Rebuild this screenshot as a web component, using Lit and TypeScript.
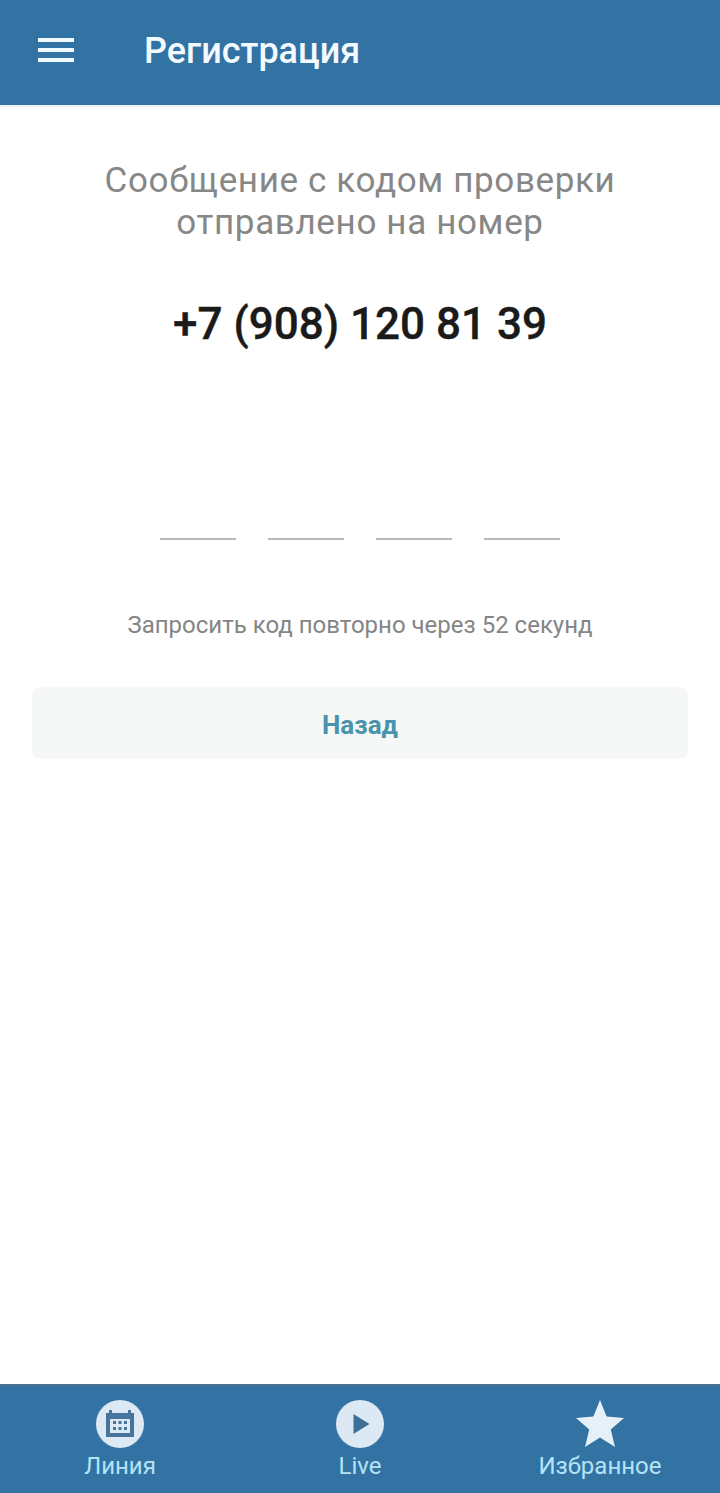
import { LitElement, html, css } from "lit";
import { customElement } from "lit/decorators.js";

@customElement("app-root")
export class AppRoot extends LitElement {
  static styles = css`
    :host {
      display: flex;
      flex-direction: column;
      height: 1493px;
      width: 720px;
      background: #fff;
      font-family: Roboto, "Liberation Sans", sans-serif;
    }
    .top {
      height: 105px;
      flex: none;
      background: #3273a4;
      display: flex;
      align-items: center;
      padding-left: 38px;
      box-sizing: border-box;
      box-shadow: 0 1px 3px rgba(50, 115, 164, 0.18);
    }
    .burger {
      width: 36px;
      display: flex;
      flex-direction: column;
      gap: 6px;
      margin-right: 70px;
      margin-top: -6px;
    }
    .burger i {
      display: block;
      height: 4px;
      background: #eefaff;
    }
    .title {
      font-size: 36px;
      font-weight: 500;
      color: #f2faff;
      line-height: 40px;
      margin-top: -4px;
    }
    .main {
      flex: 1;
      display: flex;
      flex-direction: column;
      align-items: center;
      padding: 55px 32px 0;
    }
    .msg {
      font-size: 35px;
      line-height: 42px;
      color: #878787;
      text-align: center;
      letter-spacing: 0.64px;
    }
    .phone {
      font-size: 44px;
      line-height: 52px;
      font-weight: 500;
      color: #1a1a1a;
      -webkit-text-stroke: 0.4px #1a1a1a;
      margin-top: 54px;
    }
    .code {
      display: flex;
      gap: 32px;
      margin-top: 188px;
    }
    .code i {
      display: block;
      width: 76px;
      height: 2px;
      background: #b8b8b8;
    }
    .resend {
      font-size: 24px;
      line-height: 30px;
      color: #858585;
      margin-top: 70px;
    }
    .back {
      align-self: stretch;
      height: 72px;
      margin-top: 47px;
      border-radius: 8px;
      background: #f6f7f7;
      display: flex;
      align-items: center;
      justify-content: center;
      font-size: 26px;
      font-weight: 700;
      color: #4a93ac;
      padding-top: 3px;
      box-sizing: border-box;
    }
    .nav {
      height: 109px;
      flex: none;
      background: #3273a4;
      border-top: 2px solid #4d7390;
      box-sizing: border-box;
      display: grid;
      grid-template-columns: repeat(3, 1fr);
    }
    .item {
      display: flex;
      flex-direction: column;
      align-items: center;
      padding-top: 14px;
    }
    .item svg {
      width: 48px;
      height: 48px;
      display: block;
    }
    .item span {
      font-size: 24px;
      line-height: 30px;
      margin-top: 3px;
      color: #b5e3f7;
    }
  `;

  render() {
    return html`
      <header class="top">
        <div class="burger"><i></i><i></i><i></i></div>
        <div class="title">Регистрация</div>
      </header>
      <main class="main">
        <div class="msg">Сообщение с кодом проверки<br />отправлено на номер</div>
        <div class="phone">+7 (908) 120 81 39</div>
        <div class="code"><i></i><i></i><i></i><i></i></div>
        <div class="resend">Запросить код повторно через 52 секунд</div>
        <div class="back">Назад</div>
      </main>
      <nav class="nav">
        <div class="item">
          <svg viewBox="0 0 48 48">
            <circle cx="24" cy="24" r="24" fill="#dce9f5" />
            <path
              fill="#47749a"
              fill-rule="evenodd"
              d="M10 13h3v-3h3v3h16v-3h3v3h3v24H10zM14 19v14h20V19z"
            />
            <path
              fill="#47749a"
              d="M17 21h3v3h-3zm5.500 0h3v3h-3zm5.500 0h3v3h-3zM17 27h3v3h-3zm5.500 0h3v3h-3zm5.500 0h3v3h-3z"
            />
          </svg>
          <span>Линия</span>
        </div>
        <div class="item">
          <svg viewBox="0 0 48 48">
            <circle cx="24" cy="24" r="24" fill="#dce9f5" />
            <path fill="#3e6f96" d="M17.500 14l16 10-16 10z" />
          </svg>
          <span>Live</span>
        </div>
        <div class="item">
          <svg viewBox="0 0 48 48">
            <path
              fill="#e6f0f8"
              d="M24 0l6.600 16.500L48 18l-13.200 11.400L39 47 24 37.600 9 47l4.200-17.600L0 18l17.400-1.500z"
            />
          </svg>
          <span>Избранное</span>
        </div>
      </nav>
    `;
  }
}
